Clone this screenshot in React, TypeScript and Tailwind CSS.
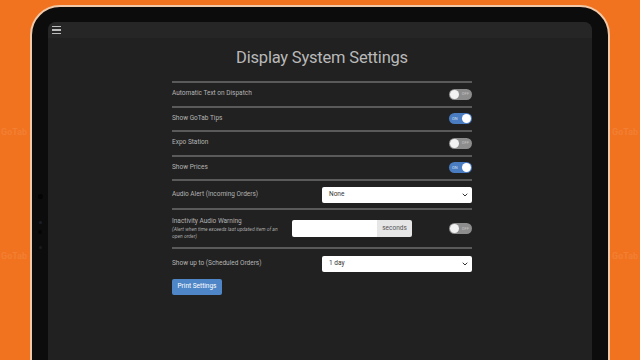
import { ChevronDown } from "lucide-react"

const font = { fontFamily: "Roboto, 'Liberation Sans', sans-serif" }

const Toggle = ({ on }: { on: boolean }) =>
  on ? (
    <div className="flex h-[11px] w-[23px] items-center justify-between rounded-full bg-[#4a7cc2] pl-[3px] pr-[1px]">
      <span className="text-[4px] leading-none text-[#cfe0f5]">ON</span>
      <span className="h-[9px] w-[9px] rounded-full bg-white" />
    </div>
  ) : (
    <div className="flex h-[11px] w-[23px] items-center justify-between rounded-full bg-[#8d8d8d] pl-[1px] pr-[3px]">
      <span className="h-[9px] w-[9px] rounded-full bg-[#f2f2f2]" />
      <span className="text-[4px] leading-none text-[#c4c4c4]">OFF</span>
    </div>
  )

const Select = ({ value }: { value: string }) => (
  <div className="flex h-[16px] w-[150px] items-center justify-between rounded-[2px] bg-white pl-[7px] pr-[3px]">
    <span className="text-[6.5px] text-[#333]">{value}</span>
    <ChevronDown size={8} strokeWidth={3} className="text-[#333]" />
  </div>
)

const ToggleRow = ({ label, on }: { label: string; on: boolean }) => (
  <div className="flex h-[24.5px] items-center justify-between border-t-2 border-[#5a5a5a]">
    <span className="text-[6.5px] text-[#b4b4b4]">{label}</span>
    <Toggle on={on} />
  </div>
)

export default function App() {
  return (
    <div className="relative h-[360px] w-[640px] overflow-hidden bg-[#f1731f]" style={font}>
      <span className="absolute left-[1px] top-[126px] text-[9px] font-bold text-[#f27f33]">GoTab</span>
      <span className="absolute left-[1px] top-[250px] text-[9px] font-bold text-[#f27f33]">GoTab</span>
      <span className="absolute left-[612px] top-[126px] text-[9px] font-bold text-[#f27f33]">GoTab</span>
      <span className="absolute left-[612px] top-[250px] text-[9px] font-bold text-[#f27f33]">GoTab</span>

      <div className="relative ml-[30px] mt-[5px] flex h-[400px] w-[580px] rounded-t-[30px] border-2 border-[#f1c9a8] bg-[#0c0c0c] pt-[15px]">
        <div className="flex w-[16px] flex-col items-center pt-[172px]">
          <span className="h-[5px] w-[5px] rounded-full bg-[#050505]" />
          <span className="mt-[22px] h-[3px] w-[3px] rounded-full bg-[#1b1e2a]" />
          <span className="mt-[6px] h-[4px] w-[4px] rounded-full bg-[#050505]" />
          <span className="mt-[12px] h-[3px] w-[3px] rounded-full bg-[#1b1b1b]" />
        </div>

        <div className="flex flex-1 flex-col overflow-hidden rounded-t-[8px] bg-[#212121]">
          <div className="flex h-[16px] items-center bg-[#262626] pl-[4px]">
            <div className="flex w-[9px] flex-col gap-[2px]">
              <span className="h-[1.5px] bg-[#bdbdbd]" />
              <span className="h-[1.5px] bg-[#bdbdbd]" />
              <span className="h-[1.5px] bg-[#bdbdbd]" />
            </div>
          </div>

          <div className="ml-[124px] flex w-[300px] flex-col">
            <h1 className="mt-[10px] mb-[13px] text-center text-[16.5px] leading-[20px] tracking-[-0.2px] text-[#b9b9b9]">
              Display System Settings
            </h1>

            <ToggleRow label="Automatic Text on Dispatch" on={false} />
            <ToggleRow label="Show GoTab Tips" on={true} />
            <ToggleRow label="Expo Station" on={false} />
            <ToggleRow label="Show Prices" on={true} />

            <div className="flex h-[29px] items-center justify-between border-t-2 border-[#5a5a5a] pt-[1px]">
              <span className="text-[6.5px] text-[#b4b4b4]">Audio Alert (Incoming Orders)</span>
              <Select value="None" />
            </div>

            <div className="flex h-[39px] items-center justify-between border-t-2 border-[#5a5a5a]">
              <div className="flex w-[112px] flex-col">
                <span className="text-[6.5px] leading-[9px] text-[#b4b4b4]">Inactivity Audio Warning</span>
                <span className="text-[5px] italic leading-[7px] text-[#a8a8a8]">
                  (Alert when time exceeds last updated item of an open order)
                </span>
              </div>
              <div className="ml-[8px] flex h-[17px] w-[120px]">
                <div className="flex-1 rounded-l-[2px] bg-white" />
                <div className="flex w-[35px] items-center justify-center rounded-r-[2px] bg-[#e6e6e6] text-[6.5px] text-[#555]">
                  seconds
                </div>
              </div>
              <div className="ml-auto">
                <Toggle on={false} />
              </div>
            </div>

            <div className="flex h-[31px] items-center justify-between border-t-2 border-[#5a5a5a]">
              <span className="text-[6.5px] text-[#b4b4b4]">Show up to (Scheduled Orders)</span>
              <Select value="1 day" />
            </div>

            <button className="mt-[1px] flex h-[16px] w-[50px] items-center justify-center rounded-[2px] bg-[#4f86c7] text-[6.5px] text-white">
              Print Settings
            </button>
          </div>
        </div>

        <div className="w-[16px]" />
      </div>
    </div>
  )
}
